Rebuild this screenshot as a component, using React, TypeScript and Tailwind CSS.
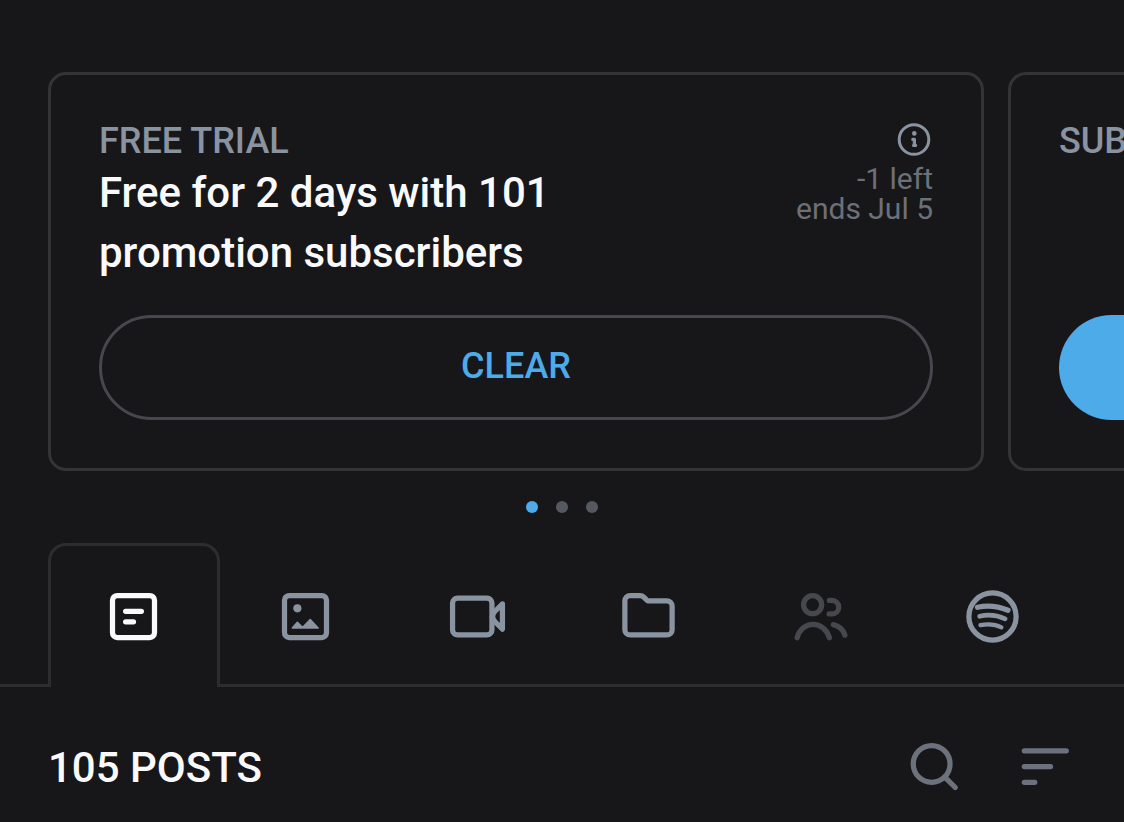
import type { ReactNode } from "react";

function Icon({ children }: { children: ReactNode }) {
  return (
    <svg
      viewBox="0 0 24 24"
      className="size-[63px] shrink-0"
      fill="none"
      stroke="currentColor"
      strokeWidth="2"
      strokeLinecap="round"
      strokeLinejoin="round"
      aria-hidden="true"
    >
      {children}
    </svg>
  );
}

const tabs = [
  {
    label: "Posts",
    color: "text-[#fafafc]",
    art: (
      <>
        <rect x="4" y="4" width="16" height="16" rx="1.8" />
        <path d="M9 10h6M9 14h3" />
      </>
    ),
  },
  {
    label: "Photos",
    color: "text-[#8a94a1]",
    art: (
      <>
        <rect x="4" y="4" width="16" height="16" rx="1.8" />
        <circle cx="8.9" cy="8.9" r="1.55" fill="currentColor" stroke="none" />
        <path
          d="M7 16.4 8.9 14.2l2 2 2.9-3 3 3.2z"
          fill="currentColor"
          strokeWidth="0.6"
        />
      </>
    ),
  },
  {
    label: "Videos",
    color: "text-[#8a94a1]",
    art: (
      <>
        <rect x="2.5" y="5" width="15" height="14" rx="1.9" />
        <path d="M21.5 7.2 18.7 10c-1.3 1.3-1.3 2.7 0 4l2.8 2.8z" />
      </>
    ),
  },
  {
    label: "Collections",
    color: "text-[#8a94a1]",
    art: (
      <path d="M3 6a2 2 0 0 1 2-2h3.8c.6 0 1 .2 1.4.6L11.6 6H19a2 2 0 0 1 2 2v9a2 2 0 0 1-2 2H5a2 2 0 0 1-2-2z" />
    ),
  },
  {
    label: "Collaborations",
    color: "text-[#46484d]",
    art: (
      <>
        <circle cx="9" cy="7.5" r="3.45" />
        <path d="M3.1 20.1c.8-3 3.2-5.1 6.1-5.1s5.3 2.1 6.2 5.1" />
        <path d="M15.4 5.9h1a2.55 2.55 0 0 1 0 5.1h-1.1" />
        <path d="M16.9 15.1c2.2.5 3.7 1.9 4.4 4" />
      </>
    ),
  },
  {
    label: "Spotify",
    color: "text-[#8a94a1]",
    art: (
      <>
        <circle cx="12" cy="12" r="9" />
        <path d="M6.3 8.5c3.9-.9 7.9-.4 11.6 1.1" />
        <path d="M7.1 11.9c3.4-.8 6.7-.4 9.7 1" strokeWidth="1.8" />
        <path d="M7.4 15.3c2.8-.6 5.6-.4 8 .8" strokeWidth="1.6" />
      </>
    ),
  },
];

function InfoIcon() {
  return (
    <svg viewBox="0 0 36 36" className="size-9" fill="none" stroke="currentColor" aria-hidden="true">
      <circle cx="17" cy="16.5" r="14.8" strokeWidth="3" />
      <circle cx="17.3" cy="10.4" r="2.3" fill="currentColor" stroke="none" />
      <path
        d="M15.8 16.4h1.6v6M16.6 22.4h2"
        strokeWidth="3.2"
        strokeLinecap="round"
        strokeLinejoin="round"
      />
    </svg>
  );
}

export default function App() {
  return (
    <main className="min-h-screen w-full overflow-hidden bg-[#17171a] pt-18 font-['Roboto',sans-serif] text-[#fafafc]">
      <section aria-label="Offers" className="flex gap-6 pl-12">
        <article className="flex w-[calc(100%-140px)] shrink-0 flex-col rounded-[18px] border-3 border-[#343437] p-12">
          <div className="flex items-start justify-between gap-6">
            <div>
              <p className="text-4xl leading-9 font-medium text-[#8a94a1]">FREE TRIAL</p>
              <h2 className="mt-1 max-w-[500px] text-[42px] leading-[60px] font-medium">
                Free for 2 days with 101 promotion subscribers
              </h2>
            </div>
            <div className="flex shrink-0 flex-col items-end text-[#8a94a1]">
              <button type="button" aria-label="Offer details">
                <InfoIcon />
              </button>
              <div className="mt-[5px] text-right text-3xl leading-[30px] text-[#6c7079]">
                <p>-1 left</p>
                <p>ends Jul 5</p>
              </div>
            </div>
          </div>
          <button
            type="button"
            className="mt-8 h-[105px] rounded-full border-3 border-[#47484d] pb-1 text-4xl leading-9 font-medium text-[#4dabe9]"
          >
            CLEAR
          </button>
        </article>
        <article className="flex w-[calc(100%-140px)] shrink-0 flex-col justify-between rounded-[18px] border-3 border-[#343437] p-12">
          <p className="text-4xl leading-9 font-medium text-[#8a94a1]">SUBSCRIPTION</p>
          <button type="button" aria-label="Subscribe" className="h-[105px] rounded-full bg-[#4dabe9]" />
        </article>
      </section>

      <div className="mt-[30px] flex justify-center gap-[18px]">
        <span className="size-3 rounded-full bg-[#4dabe9]" />
        <span className="size-3 rounded-full bg-[#55585e]" />
        <span className="size-3 rounded-full bg-[#55585e]" />
      </div>

      <nav aria-label="Content" className="mt-[30px] flex">
        <span className="w-12 shrink-0 border-b-3 border-[#2d2d30]" />
        <div className="grid grow grid-cols-6">
          {tabs.map((tab, index) => (
            <button
              key={tab.label}
              type="button"
              aria-label={tab.label}
              className={`flex h-36 items-center justify-center ${tab.color} ${
                index === 0
                  ? "rounded-t-[18px] border-x-3 border-t-3 border-[#2d2d30]"
                  : "border-b-3 border-[#2d2d30] pt-[6px]"
              }`}
            >
              <Icon>{tab.art}</Icon>
            </button>
          ))}
        </div>
        <span className="w-[46px] shrink-0 border-b-3 border-[#2d2d30]" />
      </nav>

      <header className="flex items-end justify-between px-12 pt-12">
        <h1 className="text-[42px] leading-[60px] font-medium">105 POSTS</h1>
        <div className="flex gap-12 text-[#6c727c]">
          <button type="button" aria-label="Search">
            <Icon>
              <circle cx="11.3" cy="11" r="7" />
              <path d="m16.5 16.2 3.8 3.8" />
            </Icon>
          </button>
          <button type="button" aria-label="Sort">
            <Icon>
              <path d="M4.3 6h16M4.3 12h10M4.3 18h4" />
            </Icon>
          </button>
        </div>
      </header>
    </main>
  );
}
